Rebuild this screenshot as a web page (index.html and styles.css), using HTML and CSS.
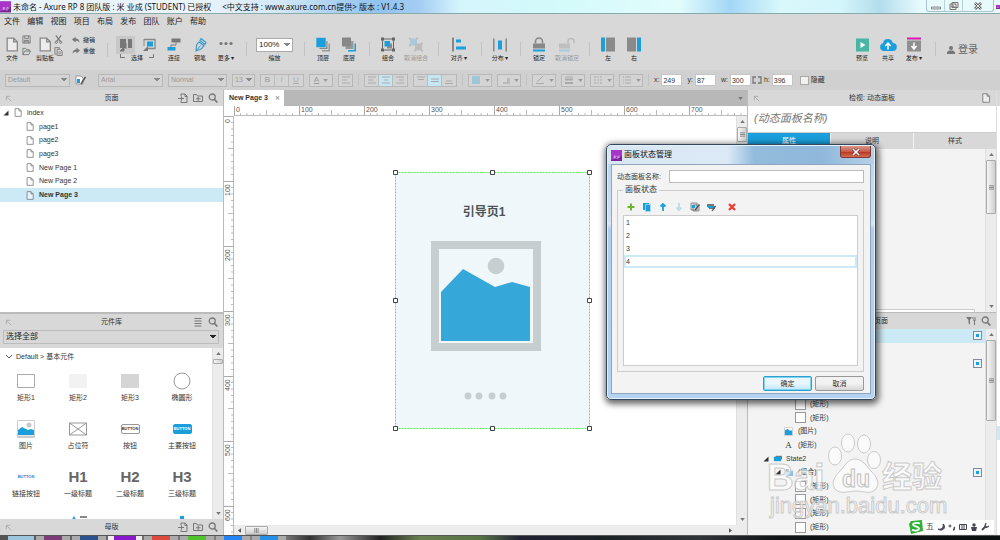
FILE: index.html
```html
<!DOCTYPE html>
<html lang="zh-CN">
<head>
<meta charset="utf-8">
<title>未命名 - Axure RP 8</title>
<link rel="stylesheet" href="styles.css">
</head>
<body>
<svg class="sprite" aria-hidden="true">
  <symbol id="page" viewBox="0 0 12 14"><path d="M1.500 1h6l3.500 3.500V13H1.500zM7.500 1v3.500H11" fill="#fff" fill-opacity=".5" stroke="currentColor" stroke-width="1.200"/></symbol>
  <symbol id="save" viewBox="0 0 10 10"><path d="M1 1h8v8H1zM3 1v3h4V1M2.500 9V6h5v3M3 7.500h4" fill="none" stroke="currentColor"/></symbol>
  <symbol id="open" viewBox="0 0 10 10"><path d="M1 8.500V1.500h3l1 1.500h3v1.500M1 8.500l2-4h6.500L7.500 8.500z" fill="none" stroke="currentColor"/></symbol>
  <symbol id="cut" viewBox="0 0 10 10"><path d="M2 .5L7 7M8 .5L3 7" fill="none" stroke="currentColor" stroke-width="1.300"/><circle cx="2.500" cy="8" r="1.300" fill="none" stroke="currentColor"/><circle cx="7.500" cy="8" r="1.300" fill="none" stroke="currentColor"/></symbol>
  <symbol id="copy" viewBox="0 0 10 10"><path d="M6 2V.700H1V8h2M3.500 2.500h3.500L9 4.500V9.500H3.500zM5 5.500h2.500M5 7.500h2.500" fill="none" stroke="currentColor"/></symbol>
  <symbol id="undo" viewBox="0 0 10 10"><path d="M0 4.500L4.500 1v2.200C7.500 3.200 9.300 5 9.300 8.500 8 6.300 6.500 6 4.500 6v2z" fill="currentColor"/></symbol>
  <symbol id="redo" viewBox="0 0 10 10"><path d="M10 4.500L5.500 1v2.200C2.500 3.200.700 5 .700 8.500 2 6.300 3.500 6 5.500 6v2z" fill="currentColor"/></symbol>
  <symbol id="search" viewBox="0 0 10 10"><circle cx="4.200" cy="4" r="3" fill="none" stroke="currentColor" stroke-width="1.300"/><path d="M6.300 6.200l3 3.300" stroke="currentColor" stroke-width="1.700"/></symbol>
  <symbol id="pin" viewBox="0 0 8 8"><path d="M1.500 6V1.500H6M2 2l5 5" fill="none" stroke="#aaa"/></symbol>
  <symbol id="addpage" viewBox="0 0 10 10"><path d="M3 3V1h4l2 2v6.500H3V8M7 1v2.500h2M0 5.500h6M3.500 3.300v4.400" fill="none" stroke="currentColor"/></symbol>
  <symbol id="addfolder" viewBox="0 0 10 10"><path d="M.5 8.500v-7h3l1 1.500h5v5.500zM3 5.800h4.500M5.200 3.800v4" fill="none" stroke="currentColor"/></symbol>
  <symbol id="tri" viewBox="0 0 6 6"><path d="M5.500.5v5H.5z" fill="#333"/></symbol>
  <symbol id="down" viewBox="0 0 6 4"><path d="M0 0h6L3 4z" fill="currentColor"/></symbol>
  <symbol id="up" viewBox="0 0 6 4"><path d="M0 4h6L3 0z" fill="currentColor"/></symbol>
  <symbol id="rp" viewBox="0 0 12 12"><path d="M0 0h12v12H0z" fill="#7a2497"/><path d="M0 0h12v6L0 11z" fill="#a834c8"/><path d="M3.500 9.500v-3h1.500l.5.700-.7.800H3.500m1.300 0l1 1.500M7.500 10V6.500H9l.6.800-.6.900H7.500" fill="none" stroke="#e9c9f3" stroke-width=".7"/></symbol>
  <symbol id="select" viewBox="0 0 14 14"><path d="M1 1h6v9H1zM9 1h4v9H9z" fill="#777"/><path d="M7 5v6M1 13l4-4v4z" stroke="#777" fill="#777"/></symbol>
  <symbol id="contain" viewBox="0 0 14 14"><path d="M2 1.500h11v9H6" fill="none" stroke="#888" stroke-width="1.300"/><path d="M2 1v7" stroke="#888"/><path d="M5 3.500h6v5H5z" fill="#1a9fdc"/><path d="M1 13l5-5v5z" fill="#777"/></symbol>
  <symbol id="connect" viewBox="0 0 14 14"><path d="M4.500 1h9v4h-9z" fill="#777"/><path d="M9 5v2.500H4V10" stroke="#777" fill="none"/><path d="M.5 9.500h8V13h-8z" fill="#1a9fdc"/></symbol>
  <symbol id="pen" viewBox="0 0 14 14"><path d="M8 1l5 4-1 2-5-4zM6 4.500l5 3.700-2.500 3L3 13.500 3.700 7z" fill="#d8d8d8" stroke="#3799c8" stroke-width="1.100"/><path d="M3 13.500L7.500 8" stroke="#3799c8"/></symbol>
  <symbol id="more" viewBox="0 0 14 14"><circle cx="2" cy="6" r="1.600" fill="#777"/><circle cx="7" cy="6" r="1.600" fill="#777"/><circle cx="12" cy="6" r="1.600" fill="#777"/></symbol>
  <symbol id="top" viewBox="0 0 14 14"><path d="M6 6h8v8H6z" fill="#999"/><path d="M3 3h9v9H3z" fill="#888" stroke="#d8d8d8"/><path d="M0 0h10v10H0z" fill="#1a9fdc" stroke="#d8d8d8" stroke-width=".6"/></symbol>
  <symbol id="bottom" viewBox="0 0 14 14"><path d="M6 6h8v8H6z" fill="#1a9fdc"/><path d="M3 3h9v9H3z" fill="#999" stroke="#d8d8d8"/><path d="M0 0h9v9H0z" fill="#888"/></symbol>
  <symbol id="group" viewBox="0 0 14 14"><path d="M1.500 1.500h11v11h-11z" fill="none" stroke="#666"/><path d="M6 6h5v5H6z" fill="#888"/><path d="M3.500 3.500H9V9H3.500z" fill="#1a9fdc"/><path d="M0 0h3v3H0zM11 0h3v3h-3zM0 11h3v3H0zM11 11h3v3h-3z" fill="#666"/></symbol>
  <symbol id="ungroup" viewBox="0 0 14 14"><path d="M1 1h7v7H1z" fill="#a9cbd9"/><path d="M6 6h7v7H6z" fill="#bcbcbc"/><path d="M0 0h2v2H0zM7 0h2v2H7zM0 7h2v2H0zM12 5h2v2h-2zM5 12h2v2H5zM12 12h2v2h-2z" fill="#bbb"/></symbol>
  <symbol id="align" viewBox="0 0 14 14"><path d="M0 0h2v14H0z" fill="#888"/><path d="M4 2h5v3H4zM4 9h10v3H4z" fill="#1a9fdc"/></symbol>
  <symbol id="spread" viewBox="0 0 14 14"><path d="M0 1h1.500v13H0zM12.500 1H14v13h-1.500z" fill="#888"/><path d="M5 3h4v9H5z" fill="#1a9fdc"/></symbol>
  <symbol id="lock" viewBox="0 0 14 14"><path d="M3.500 6V4a3.500 3.500 0 0 1 7 0v2" fill="none" stroke="#888" stroke-width="1.600"/><path d="M1 6h12v5H1z" fill="#888"/><path d="M1 12h12v2H1z" fill="#1a9fdc"/></symbol>
  <symbol id="unlock" viewBox="0 0 18 14"><path d="M10 6V4a3 3 0 0 1 6 0v2" fill="none" stroke="#bbb" stroke-width="1.500"/><path d="M1 6h11v5H1z" fill="#bfbfbf"/><path d="M1 12h11v2H1z" fill="#a9cbd9"/></symbol>
  <symbol id="left" viewBox="0 0 14 14"><path d="M0 0h4v14H0z" fill="#1a9fdc"/><path d="M5 0h9v14H5z" fill="#8a8a8a"/></symbol>
  <symbol id="right" viewBox="0 0 14 14"><path d="M10 0h4v14h-4z" fill="#1a9fdc"/><path d="M0 0h9v14H0z" fill="#8a8a8a"/></symbol>
  <symbol id="play" viewBox="0 0 14 14"><path d="M1 1h13v13H1z" fill="#4bb5a3"/><path d="M5.500 4.500l5 3-5 3z" fill="#fff"/></symbol>
  <symbol id="cloud" viewBox="0 0 18 14"><path d="M4.500 13.500a4 4 0 0 1-.5-7.800 5 5 0 0 1 9.800-.2 4 4 0 0 1 0 8z" fill="#1a9fdc"/><path d="M9 12V7M6.300 8.500L9 5.500l2.700 3" stroke="#fff" stroke-width="1.500" fill="none"/></symbol>
  <symbol id="publish" viewBox="0 0 14 14"><path d="M0 0h14v2H0z" fill="#d61ab0"/><path d="M0 3h14v11H0z" fill="#8f8f8f"/><path d="M7 5v5M4.500 8.500L7 11.500l2.500-3" stroke="#fff" stroke-width="1.500" fill="none"/></symbol>
  <symbol id="picture" viewBox="0 0 18 18"><path d="M.5.500h17v17H.500z" fill="#fff" stroke="#ccc"/><circle cx="12" cy="5" r="2.500" fill="#c9c9c9"/><path d="M1 10l4-3 6 3 3-1 3 1v5H1z" fill="#1a9fdc"/><path d="M1 15.500h16v2H1z" fill="#ccc"/></symbol>
  <symbol id="tl" viewBox="0 0 10 8"><path d="M1 1h8M1 4h5M1 7h8" stroke="currentColor"/></symbol>
  <symbol id="tc" viewBox="0 0 10 8"><path d="M1 1h8M3 4h4M1 7h8" stroke="currentColor"/></symbol>
  <symbol id="tr" viewBox="0 0 10 8"><path d="M1 1h8M4 4h5M1 7h8" stroke="currentColor"/></symbol>
  <symbol id="vt" viewBox="0 0 10 8"><path d="M1 1h8M2 3.500h6" stroke="currentColor"/></symbol>
  <symbol id="vm" viewBox="0 0 10 8"><path d="M1 3h8M1 5.500h8" stroke="currentColor"/></symbol>
  <symbol id="vb" viewBox="0 0 10 8"><path d="M2 5h6M1 7.500h8" stroke="currentColor"/></symbol>
  <symbol id="grip" viewBox="0 0 6 6"><path d="M0 1h6M0 3h6M0 5h6" stroke="#777"/></symbol>
  <symbol id="stylebrush" viewBox="0 0 11 10"><path d="M1 1h5l2 2v6H1z" fill="#fff" stroke="#999"/><path d="M2 4h3v4H2z" fill="#1a9fdc"/><path d="M10.500 2L6 9" stroke="#555" stroke-width="1.500"/></symbol>
</svg>

<div class="app">
  <header class="titlebar">
    <svg class="logo"><use href="#rp"/></svg>
    <span>未命名 - Axure RP 8 团队版 : 米 业成 (STUDENT) 已授权</span>
    <span class="support">&lt;中文支持 : www.axure.com.cn提供&gt; 版本 : V1.4.3</span>
    <div class="winctl">
      <button aria-label="最小化"><svg viewBox="0 0 12 8"><path d="M1.500 5h9v2h-9z" fill="#ddd" stroke="#777" stroke-width=".8"/></svg></button>
      <button aria-label="还原"><svg viewBox="0 0 12 8"><path d="M4 .5h6v5H4zM2 2h6v5.500H2zM4 4h2v1.500H4z" fill="#eee" stroke="#777"/></svg></button>
      <button class="wide" aria-label="关闭"><svg viewBox="0 0 12 8"><path d="M3 1l6 6M9 1L3 7" stroke="#666" stroke-width="2.600"/><path d="M3.300 1.300l5.400 5.400M8.700 1.300L3.300 6.700" stroke="#eee"/></svg></button>
    </div>
    <svg class="logo peek"><use href="#rp"/></svg>
  </header>

  <nav class="menubar">
    <a href="#">文件</a><a href="#">编辑</a><a href="#">视图</a><a href="#">项目</a><a href="#">布局</a><a href="#">发布</a><a href="#">团队</a><a href="#">账户</a><a href="#">帮助</a>
  </nav>

  <div class="toolbar">
    <button class="tool narrow"><svg><use href="#page"/></svg>文件</button>
    <div class="minis"><button aria-label="保存"><svg><use href="#save"/></svg></button><button aria-label="打开"><svg><use href="#open"/></svg></button></div>
    <button class="tool narrow clip"><svg><use href="#page"/></svg>剪贴板</button>
    <div class="minis"><button aria-label="剪切"><svg><use href="#cut"/></svg></button><button aria-label="复制"><svg><use href="#copy"/></svg></button></div>
    <div class="minis undo"><button><svg><use href="#undo"/></svg>撤销</button><button><svg><use href="#redo"/></svg>重做</button></div>
    <i class="sep first"></i>
    <div class="modes">
      <div><button class="on" aria-label="相交选择"><svg><use href="#select"/></svg></button><button aria-label="包含选择"><svg><use href="#contain"/></svg></button></div>
      <div class="modelabel"><i></i>选择<i class="end"></i></div>
    </div>
    <button class="tool"><svg><use href="#connect"/></svg>连接</button>
    <button class="tool"><svg><use href="#pen"/></svg>钢笔</button>
    <button class="tool"><svg><use href="#more"/></svg>更多 ▾</button>
    <i class="sep"></i>
    <label class="zoom"><select><option>100%</option></select>缩放</label>
    <i class="sep"></i>
    <button class="tool"><svg><use href="#top"/></svg>顶层</button>
    <button class="tool"><svg><use href="#bottom"/></svg>底层</button>
    <i class="sep"></i>
    <button class="tool"><svg><use href="#group"/></svg>组合</button>
    <button class="tool large off"><svg><use href="#ungroup"/></svg>取消组合</button>
    <i class="sep"></i>
    <button class="tool large"><svg><use href="#align"/></svg>对齐 ▾</button>
    <i class="sep"></i>
    <button class="tool"><svg><use href="#spread"/></svg>分布 ▾</button>
    <i class="sep"></i>
    <button class="tool"><svg><use href="#lock"/></svg>锁定</button>
    <button class="tool large off"><svg class="w18"><use href="#unlock"/></svg>取消锁定</button>
    <i class="sep"></i>
    <button class="tool"><svg><use href="#left"/></svg>左</button>
    <button class="tool"><svg><use href="#right"/></svg>右</button>
    <div class="account">
      <button class="tool"><svg><use href="#play"/></svg>预览</button>
      <button class="tool"><svg class="w18"><use href="#cloud"/></svg>共享</button>
      <button class="tool"><svg><use href="#publish"/></svg>发布 ▾</button>
      <i class="sep"></i>
      <button class="login"><svg viewBox="0 0 8 8"><circle cx="4" cy="2" r="2" fill="#777"/><path d="M0 8V6l2-1.500h4L8 6v2z" fill="#777"/></svg>登录</button>
    </div>
  </div>

  <div class="stylebar">
    <select class="s64" aria-label="样式"><option>Default</option></select>
    <button class="plain" aria-label="样式管理"><svg><use href="#stylebrush"/></svg></button>
    <select class="s64 font" aria-label="字体"><option>Arial</option></select>
    <select class="s58" aria-label="字形"><option>Normal</option></select>
    <select class="s22" aria-label="字号"><option>13</option></select>
    <div class="seg"><button><b>B</b></button><button><em>I</em></button><button><u>U</u></button></div>
    <button class="drop"><u>A</u><svg class="arr"><use href="#down"/></svg></button>
    <button class="drop small" aria-label="列表"><svg><use href="#tl"/></svg></button>
    <i class="sep"></i>
    <div class="seg"><button aria-label="左对齐"><svg><use href="#tl"/></svg></button><button class="on" aria-label="居中"><svg><use href="#tc"/></svg></button><button aria-label="右对齐"><svg><use href="#tr"/></svg></button></div>
    <div class="seg"><button aria-label="顶部"><svg><use href="#vt"/></svg></button><button class="on" aria-label="中部"><svg><use href="#vm"/></svg></button><button aria-label="底部"><svg><use href="#vb"/></svg></button></div>
    <i class="sep"></i>
    <button class="drop" aria-label="填充"><svg viewBox="0 0 10 8"><path d="M1 0h8v8H1z" fill="#9fc6d6"/></svg><svg class="arr"><use href="#down"/></svg></button>
    <button class="drop" aria-label="阴影"><svg viewBox="0 0 10 8"><path d="M3 2h7v6H3z" fill="#bbb"/><path d="M1 0h6v6H1z" fill="#d6d6d6"/></svg><svg class="arr"><use href="#down"/></svg></button>
    <i class="sep"></i>
    <button class="drop" aria-label="线条颜色"><svg viewBox="0 0 10 8"><path d="M2 6L8 0M1 7.500h8" stroke="#aaa"/></svg><svg class="arr"><use href="#down"/></svg></button>
    <button class="drop" aria-label="线宽"><svg viewBox="0 0 10 8"><path d="M1 1h8" stroke="#aaa"/><path d="M1 3.500h8M1 7h8" stroke="#aaa" stroke-width="2"/></svg><svg class="arr"><use href="#down"/></svg></button>
    <button class="drop" aria-label="线型"><svg viewBox="0 0 10 8"><path d="M1 1h8M1 4h8M1 7h8" stroke="#aaa" stroke-dasharray="2 1"/></svg><svg class="arr"><use href="#down"/></svg></button>
    <button class="drop" aria-label="箭头"><svg viewBox="0 0 10 8"><path d="M1 1h8M1 4h8M1 7h8" stroke="#aaa" stroke-dasharray="1 1 6"/></svg><svg class="arr"><use href="#down"/></svg></button>
    <i class="sep"></i>
    <label>x: <input value="249"></label>
    <label>y: <input value="87"></label>
    <label>w: <input value="300"></label>
    <label class="linked"><svg viewBox="0 0 10 8"><path d="M4 1H1v6h3M6 1h3v6H6" fill="none" stroke="#777" stroke-width="1.300"/></svg>h: <input value="396"></label>
    <label class="hide"><input type="checkbox">隐藏</label>
  </div>

  <main class="work">
    <aside class="left">
      <section class="pages">
        <h2 class="head"><svg class="pin"><use href="#pin"/></svg><span>页面</span><svg><use href="#addpage"/></svg><svg><use href="#addfolder"/></svg><svg><use href="#search"/></svg></h2>
        <ul class="tree">
          <li class="root"><svg class="tri"><use href="#tri"/></svg><svg><use href="#page"/></svg>index</li>
          <li><svg><use href="#page"/></svg>page1</li>
          <li><svg><use href="#page"/></svg>page2</li>
          <li><svg><use href="#page"/></svg>page3</li>
          <li><svg><use href="#page"/></svg>New Page 1</li>
          <li><svg><use href="#page"/></svg>New Page 2</li>
          <li class="current"><svg><use href="#page"/></svg>New Page 3</li>
        </ul>
      </section>
      <section class="library">
        <h2 class="head"><svg class="pin"><use href="#pin"/></svg><span>元件库</span><svg viewBox="0 0 10 10"><path d="M1.500 1.500h7M1.500 4h7M1.500 6.500h7M1.500 9h7" stroke="currentColor"/></svg><svg><use href="#search"/></svg></h2>
        <div class="libselect"><select aria-label="元件库"><option>选择全部</option></select></div>
        <div class="libbody">
          <div class="widgets">
            <h3><svg viewBox="0 0 8 6"><path d="M1 1l3 3 3-3" fill="none" stroke="#555"/></svg>Default &gt; 基本元件</h3>
            <ul>
              <li><svg viewBox="0 0 20 20"><path d="M1.500 3.500h17v13h-17z" fill="#fff" stroke="#aaa"/></svg>矩形1</li>
              <li><svg viewBox="0 0 20 20"><path d="M1 3h18v14H1z" fill="#f2f2f2"/></svg>矩形2</li>
              <li><svg viewBox="0 0 20 20"><path d="M1 3h18v14H1z" fill="#d5d5d5"/></svg>矩形3</li>
              <li><svg viewBox="0 0 20 20"><circle cx="10" cy="10" r="8" fill="#fff" stroke="#999"/></svg>椭圆形</li>
              <li><svg viewBox="-1 -1 20 20"><use href="#picture" width="18" height="18"/></svg>图片</li>
              <li><svg viewBox="0 0 20 20"><path d="M1.500 4h17v12h-17zl17 12M18.500 4l-17 12" fill="none" stroke="#999"/></svg>占位符</li>
              <li><span class="wbtn">BUTTON</span>按钮</li>
              <li><span class="wbtn primary">BUTTON</span>主要按钮</li>
              <li><span class="wbtn link">BUTTON</span>链接按钮</li>
              <li><b>H1</b>一级标题</li>
              <li><b>H2</b>二级标题</li>
              <li><b>H3</b>三级标题</li>
              <li></li>
              <li><svg viewBox="0 0 20 20"><path d="M3 6l3-5 3 5z" fill="#1a9fdc"/><path d="M12 1h7v2h-7z" fill="#888"/></svg></li>
              <li></li>
              <li><svg viewBox="0 0 20 20"><path d="M8 1h4v5H8z" fill="#1a9fdc"/></svg></li>
            </ul>
          </div>
          <div class="vbar"><svg class="arr"><use href="#up"/></svg><i class="thumb tiny"></i><svg class="arr last"><use href="#down"/></svg></div>
        </div>
        <h2 class="head"><svg class="pin"><use href="#pin"/></svg><span>母版</span><svg><use href="#addpage"/></svg><svg><use href="#addfolder"/></svg><svg><use href="#search"/></svg></h2>
      </section>
    </aside>

    <section class="center">
      <div class="tabs"><div class="tab">New Page 3<button aria-label="关闭标签">✕</button></div><svg class="arr"><use href="#down"/></svg></div>
      <div class="editor">
        <div class="corner"></div>
        <div class="ruler hr">
          <svg class="ticks"><defs><pattern id="ht" width="65" height="10" patternUnits="userSpaceOnUse"><path d="M.5 0v10" stroke="#aaa"/><path d="M6.500 7v3M13 7v3M19.500 7v3M26 7v3M39 7v3M45.500 7v3M52 7v3M58.500 7v3M32.500 4v6" stroke="#bbb"/></pattern></defs><rect width="100%" height="10" fill="url(#ht)"/></svg>
          <span>0</span><span>100</span><span>200</span><span>300</span><span>400</span><span>500</span><span>600</span><span>700</span>
        </div>
        <div class="ruler vr">
          <svg class="ticks"><defs><pattern id="vtk" width="10" height="65" patternUnits="userSpaceOnUse"><path d="M0 .5h10" stroke="#aaa"/><path d="M7 6.500h3M7 13h3M7 19.500h3M7 26h3M7 39h3M7 45.500h3M7 52h3M7 58.500h3M4 32.500h6" stroke="#bbb"/></pattern></defs><rect width="10" height="100%" fill="url(#vtk)"/></svg>
          <span>0</span><span>100</span><span>200</span><span>300</span><span>400</span><span>500</span><span>600</span>
        </div>
        <div class="canvas">
          <div class="panel">
            <svg viewBox="0 0 195 257">
              <path d="M.5.500h194v256H.500z" fill="#eff7fa" stroke="#4df04d" stroke-dasharray="2 1"/>
              <path d="M36 69h110v110H36z" fill="#c7ced0"/><path d="M44 77h94v94H44z" fill="#eff7fa"/>
              <circle cx="101" cy="94" r="8.300" fill="#c7ced0"/>
              <path d="M46 120l22-23 32 18 17-5 18 5v54H46z" fill="#35a7d9"/>
              <g fill="#c7ced0"><circle cx="73" cy="224" r="3.400"/><circle cx="84" cy="224" r="3.400"/><circle cx="97" cy="224" r="3.400"/><circle cx="108" cy="224" r="3.400"/></g>
              <g fill="#fff" stroke="#444"><path d="M-1.500-1.500h4v4h-4zM95.500-1.500h4v4h-4zM192.500-1.500h4v4h-4zM-1.500 126.500h4v4h-4zM192.500 126.500h4v4h-4zM-1.500 254.500h4v4h-4zM95.500 254.500h4v4h-4zM192.500 254.500h4v4h-4z"/></g>
            </svg>
            <strong>引导页1</strong>
          </div>
        </div>
        <div class="vbar"><svg class="arr"><use href="#up"/></svg><i class="thumb short"><svg><use href="#grip"/></svg></i><svg class="arr last"><use href="#down"/></svg></div>
        <div class="hbar"><svg viewBox="0 0 4 6"><path d="M4 0v6L0 3z" fill="#555"/></svg><i class="thumb"><svg class="turn"><use href="#grip"/></svg></i><svg class="last" viewBox="0 0 4 6"><path d="M0 0v6l4-3z" fill="#555"/></svg></div>
      </div>
    </section>

    <aside class="right">
      <section class="inspect">
        <h2 class="head"><svg class="pin"><use href="#pin"/></svg><span>检视: 动态面板</span><svg><use href="#page"/></svg></h2>
        <div class="name">(动态面板名称)</div>
        <div class="ptabs"><button class="on">属性</button><button>说明</button><button>样式</button></div>
        <div class="props"><div class="field"></div><div class="vbar"><svg class="arr"><use href="#up"/></svg><i class="thumb"><svg><use href="#grip"/></svg></i><svg class="arr last"><use href="#down"/></svg></div></div>
      </section>
      <section class="outline">
        <h2 class="head"><svg class="pin"><use href="#pin"/></svg><span>概要: 页面</span><svg viewBox="0 0 10 10"><path d="M0 1h6L4 4v5L2.500 7V4z" fill="#777"/><path d="M6 2h4M7 4h3M8.500 4v5" stroke="#777"/></svg><svg><use href="#search"/></svg></h2>
        <div class="outbody">
          <ul>
            <li class="current"><i class="state"></i></li><li></li><li><i class="state"></i></li><li></li><li></li>
            <li class="d3"><i class="box"></i>(矩形)</li>
            <li class="d3"><i class="box"></i>(矩形)</li>
            <li class="d2"><svg viewBox="0 0 10 10"><path d="M.5.500h9v9h-9z" fill="#fff" stroke="#ccc"/><path d="M1 4l3-2 2 2h3v5H1z" fill="#1a9fdc"/></svg>(图片)</li>
            <li class="d2"><span class="glyph">A</span>(矩形)</li>
            <li class="d1"><svg class="tri"><use href="#tri"/></svg><svg viewBox="0 0 10 10"><path d="M3 2h7v4H3z" fill="#777"/><path d="M1 3h8v5H1z" fill="#1a9fdc"/></svg>State2</li>
            <li class="d1 deep"><svg class="tri"><use href="#tri"/></svg><svg viewBox="0 0 10 10"><path d="M1 1h3l1 2h4v6H1z" fill="#7fc4e4"/><path d="M1 1h3v3H1z" fill="#444"/></svg>(组合)<i class="state"></i></li>
            <li class="d3"><i class="box"></i>(矩形)</li>
            <li class="d3"><i class="box"></i>(矩形)</li>
            <li class="d3"><i class="box"></i>(矩形)</li>
            <li class="d3"><i class="box"></i>(矩形)</li>
          </ul>
          <div class="vbar"><svg class="arr"><use href="#up"/></svg><i class="thumb tall"><svg><use href="#grip"/></svg></i></div>
        </div>
      </section>
    </aside>
    <div class="neighbour"><i></i><i class="hit"></i></div>
  </main>
  <footer class="taskbar"><i class="c1"></i><i class="c2"></i><i class="c3"></i><i class="c4"></i><i class="c5"></i><i class="c6"></i><i class="c7"></i><i class="c8"></i></footer>

  <svg class="mark" viewBox="0 0 190 92" aria-label="Baidu 经验">
    <g fill="#fff" fill-opacity=".75" stroke="#c4c4c4" stroke-width="1">
      <ellipse cx="67" cy="23" rx="6.500" ry="9"/><ellipse cx="80" cy="10" rx="6.500" ry="9"/><ellipse cx="96" cy="11" rx="6.500" ry="9"/><ellipse cx="106" cy="27" rx="6.500" ry="8.500"/>
      <path d="M87 26c8 0 11 7 16 12 6 6 9 12 5 18-5 6-13 2-20 2s-16 4-21-2c-4-6-1-12 5-18 5-5 8-12 15-12z"/>
      <g font-family="'Liberation Sans','Noto Sans CJK SC',sans-serif" font-weight="bold">
        <text x="-1" y="57" font-size="37">Bai</text><text x="114" y="54" font-size="30">经验</text>
        <text x="2" y="80" font-size="22" font-weight="normal">jingyan.baidu.com</text>
      </g>
    </g>
    <text x="74" y="54" font-size="23" font-family="'Liberation Sans',sans-serif" font-weight="bold" fill="#fafafa" stroke="#b8b8b8">du</text>
  </svg>

  <div class="ime">
    <svg class="sogou" viewBox="0 0 14 14"><path d="M2 1l11-1 1 11-12 3L0 4z" fill="#2eb135"/><path d="M11 3.500c-3-1-7-.5-7 1.200S10.500 6.500 10 8.800 5 11 3 9.700" fill="none" stroke="#fff" stroke-width="1.800"/></svg>
    <span>五</span>
    <svg viewBox="0 0 8 8"><path d="M6 1c1 4-2 6-5 5 2 2 6 1 6.500-1.500C8 3 7 1.500 6 1z" fill="#445" stroke="#445"/></svg>
    <svg viewBox="0 0 8 8"><circle cx="2" cy="3" r="1" fill="none" stroke="#445"/><path d="M6 4c1 1 0 3-1 3" stroke="#445" stroke-width="1.500" fill="none"/></svg>
    <svg viewBox="0 0 8 8"><path d="M.5 1.500h7v5h-7zM2 3h4M2 5h4" fill="none" stroke="#445"/></svg>
    <svg viewBox="0 0 8 8"><circle cx="4" cy="2" r="1.700" fill="#445"/><path d="M1 4h6l-1 4H2z" fill="#445"/></svg>
    <svg viewBox="0 0 8 8"><path d="M1 7l4-4" stroke="#445" stroke-width="1.800"/><path d="M5 0L4 3l1.500 1.500L8 3" stroke="#445" stroke-width="1.300" fill="none"/></svg>
  </div>

  <div class="dialog" role="dialog" aria-labelledby="dlg">
    <div class="dtitle"><svg><use href="#rp"/></svg><span id="dlg">面板状态管理</span>
      <button aria-label="关闭"><svg viewBox="0 0 10 8"><path d="M2 1l6 6M8 1L2 7" stroke="#733" stroke-width="2.800"/><path d="M2 1l6 6M8 1L2 7" stroke="#fff" stroke-width="1.600"/></svg></button></div>
    <form class="dbody">
      <label class="dname">动态面板名称:<input></label>
      <fieldset>
        <legend>面板状态</legend>
        <div class="dtools">
          <button type="button" aria-label="添加"><svg viewBox="0 0 10 10"><path d="M5 1.500v7M1.500 5h7" stroke="#6cb52d" stroke-width="2"/></svg></button>
          <button type="button" aria-label="复制"><svg viewBox="0 0 10 10"><path d="M1 1h6v7H1z" fill="#1a9fdc"/><path d="M3.500 2.500h5v7h-5z" fill="#1a9fdc" stroke="#b5def0" stroke-width=".7"/></svg></button>
          <button type="button" aria-label="上移"><svg viewBox="0 0 10 10"><path d="M5 9V3M2.500 4.500L5 2l2.500 2.500" stroke="#1a9fdc" stroke-width="1.800" fill="none"/></svg></button>
          <button type="button" aria-label="下移"><svg viewBox="0 0 10 10"><path d="M5 1v6M2.500 5.500L5 8l2.500-2.500" stroke="#b9dcec" stroke-width="1.800" fill="none"/></svg></button>
          <button type="button" aria-label="编辑状态"><svg viewBox="0 0 10 10"><path d="M1 1h6v7H1zM3 3h6v6H3z" fill="#ddd" stroke="#777" stroke-width=".8"/><path d="M2 3h3v3H2z" fill="#1a9fdc"/><path d="M9.500 2.500L5 8" stroke="#555" stroke-width="1.300"/></svg></button>
          <button type="button" aria-label="编辑全部"><svg viewBox="0 0 10 10"><path d="M1 2h7v3H1zM3 4h6v3H3z" fill="#777"/><path d="M2 4h5v2H2z" fill="#1a9fdc"/><path d="M9.500 4L6 9" stroke="#555" stroke-width="1.300"/></svg></button>
          <button type="button" class="del" aria-label="删除"><svg viewBox="0 0 10 10"><path d="M2 2l6 6M8 2L2 8" stroke="#f03a2c" stroke-width="2.200"/></svg></button>
        </div>
        <ul class="states"><li>1</li><li>2</li><li>3</li><li class="current">4</li></ul>
      </fieldset>
      <div class="dfoot"><button type="button" class="ok">确定</button><button type="button">取消</button></div>
    </form>
  </div>
</div>
</body>
</html>
```
FILE: styles.css
```css
* { box-sizing: border-box; }
body { margin: 0; font: 7px/10px "Liberation Sans", "Noto Sans CJK SC", sans-serif; color: #333; background: #d8d8d8; }
button, input, select { font: inherit; color: inherit; margin: 0; padding: 0; border: 0; background: none; border-radius: 0; }
ul { list-style: none; margin: 0; padding: 0; }
h2, h3 { margin: 0; font: inherit; }
svg { display: block; flex: none; }
.sprite { position: absolute; width: 0; height: 0; }
.app { position: relative; height: 100vh; display: flex; flex-direction: column; overflow: hidden; }

.titlebar { height: 14px; flex: none; display: flex; align-items: center; font: 8px/13px "Noto Sans", "Noto Sans CJK SC", sans-serif; color: #111; border-bottom: 1px solid #8aa; background: linear-gradient(90deg, #e8f2fa 0, #eaf4fb 20%, #d3e8f6 28%, #a8d0f0 34%, #8fc3ee 38%, #a6cdf3 42%, #d5f5fc 46%, #d3fafa 55%, #e2fcfc 68%, #a3d6f5 73%, #d8f8fb 78%, #d4f5fb 84%, #b3ddec 88%, #e6fafc 92%, #e8fafc 100%); }
.logo { width: 11px; height: 12px; margin-right: 2px; }
.peek { width: 4px; margin: 0; }
.support { margin-left: 11px; }
.winctl { margin-left: auto; margin-right: 2px; align-self: flex-start; display: flex; height: 12px; border: 1px solid #a9c4cc; border-top: 0; border-radius: 0 0 3px 3px; }
.winctl button { width: 18px; display: grid; place-items: center; border-right: 1px solid #b9d2d8; }
.winctl .wide { width: 30px; border: 0; }
.winctl svg { width: 12px; height: 8px; }

.menubar { height: 16px; flex: none; width: 208px; padding: 0 2px 0 4px; display: flex; justify-content: space-between; align-items: center; font-size: 8px; }
.menubar a { color: #222; text-decoration: none; }

.toolbar { height: 40px; flex: none; display: flex; align-items: center; padding-left: 2px; font-size: 6px; line-height: 8px; color: #222; }
.tool { width: 26px; flex: none; display: flex; flex-direction: column; align-items: center; gap: 2px; white-space: nowrap; height: 26px; line-height: 8px; }
.tool svg { width: 14px; height: 15px; }
.tool svg.w18 { width: 18px; }
.narrow { width: 20px; }
.narrow svg { color: #888; }
.clip { width: 16px; margin-left: 5px; margin-right: 1px; }
.large { width: 30px; }
.off { color: #999; }
.minis { width: 10px; flex: none; display: flex; flex-direction: column; gap: 3px; margin-bottom: 9px; }
.minis svg { width: 9px; height: 9px; color: #777; }
.minis button { display: flex; align-items: center; gap: 3px; white-space: nowrap; }
.undo { width: 25px; margin-left: 8px; }
.undo svg { width: 8px; height: 8px; }
.sep { width: 1px; height: 14px; flex: none; background: #c2c2c2; margin: 0 5px 0 7px; }
.toolbar .sep { margin-bottom: 2px; }
.toolbar .first { margin: 0 8px 0 10px; }
.modes { width: 42px; margin: 0 3px 2px 0; display: flex; flex-direction: column; }
.modes div { display: flex; justify-content: space-between; }
.modes button { width: 19px; height: 18px; display: grid; place-items: center; }
.modes .on { background: #c8c8c8; }
.modes svg { width: 14px; height: 14px; }
.modes .modelabel { justify-content: center; gap: 6px; }
.modelabel i { width: 5px; height: 4px; border: solid #777; border-width: 0 0 1px 1px; }
.modelabel .end { border-width: 0 1px 1px 0; }
.zoom { margin: 0 4px; width: 37px; display: flex; flex-direction: column; align-items: center; gap: 2px; }
.zoom select { width: 37px; height: 14px; border: 1px solid #aaa; background-color: #fff; font-size: 8px; }
select { appearance: none; background-image: linear-gradient(225deg, #888 50%, transparent 50%), linear-gradient(135deg, #888 50%, transparent 50%); background-size: 3px 4px; background-position: right 5px center, right 2px center; background-repeat: no-repeat; padding-left: 2px; }
.account { margin-left: auto; display: flex; align-items: center; padding-right: 22px; }
.account .sep { margin-right: 11px; margin-left: 8px; }
.login { display: flex; align-items: center; gap: 3px; font-size: 10px; line-height: 14px; color: #666; }
.login svg { width: 8px; height: 8px; }

.stylebar { height: 20px; flex: none; display: flex; align-items: center; gap: 5px; padding-left: 5px; background: #d0d0d0; white-space: nowrap; }
.stylebar select, .seg, .drop { height: 13px; flex: none; border: 1px solid #b8b8b8; color: #999; background-color: #d4d4d4; }
.s64 { width: 65px; }
.s58 { width: 59px; }
.s22 { width: 23px; }
.font { margin-left: 7px; }
.plain svg { width: 11px; height: 10px; }
.seg { display: flex; }
.seg button { width: 14px; display: grid; place-items: center; border-right: 1px solid #bbb; font-size: 8px; color: #aaa; }
.seg button:last-child { border: 0; }
.seg svg { width: 10px; height: 8px; }
.seg .on { background: #c5e7f3; }
.drop { width: 24px; display: flex; align-items: center; justify-content: center; gap: 4px; font-size: 8px; }
.drop svg { width: 10px; height: 8px; }
.small { width: 15px; color: #aaa; }
.drop .arr, .arr { width: 5px; height: 3px; color: #999; }
.stylebar .sep { margin: 0; height: 12px; }
.stylebar label { display: flex; align-items: center; gap: 2px; }
.stylebar label input { width: 21px; height: 12px; background: #fff; border: 1px solid #c5c5c5; padding-left: 1px; }
.stylebar label svg { width: 10px; height: 8px; }
.linked { margin-left: -4px; }
.stylebar .hide { margin-left: 2px; }
.stylebar .hide input { width: 9px; height: 9px; appearance: none; background: #f2f2f2; border: 1px solid #aaa; }

.work { flex: 1; min-height: 0; display: grid; grid-template-columns: 223px minmax(0, 1fr) 248px 4px; background: #fff; }
.head { height: 16px; flex: none; background: #d8d8d8; display: flex; align-items: center; gap: 5px; padding: 0 5px; position: relative; color: #333; }
.head span { position: absolute; left: 0; right: 0; text-align: center; }
.head svg { width: 10px; height: 10px; color: #777; }
.head .pin { width: 7px; height: 7px; margin-right: auto; }
.left { display: flex; flex-direction: column; min-height: 0; }
.pages { height: 222px; flex: none; }
.tree { display: grid; grid-template-rows: repeat(7, 1fr); height: 96px; }
.tree li { display: flex; align-items: center; gap: 5px; padding-left: 26px; }
.tree .root { padding-left: 3px; }
.tree svg { width: 8px; height: 9px; color: #777; }
.tree .tri { width: 6px; height: 6px; }
.current { background: #cbeaf6; }
.tree .current { font-weight: bold; }
.library { flex: 1; min-height: 0; display: flex; flex-direction: column; border-top: 2px solid #bbb; }
.libselect { background: #d8d8d8; padding: 0 4px 4px 3px; }
.libselect select { display: block; width: 100%; height: 14px; border: 1px solid #bcbcbc; font-size: 8px; color: #222; background-image: linear-gradient(225deg, #222 50%, transparent 50%), linear-gradient(135deg, #222 50%, transparent 50%); }
.libbody { flex: 1; min-height: 0; display: flex; }
.widgets { flex: 1; overflow: hidden; }
.widgets h3 { height: 17px; display: flex; align-items: center; gap: 3px; padding-left: 5px; }
.widgets h3 svg { width: 8px; height: 6px; }
.widgets ul { display: grid; grid-template-columns: repeat(4, 1fr); padding: 6px 4px 0 0; }
.widgets li { height: 48px; display: flex; flex-direction: column; align-items: center; gap: 2px; white-space: nowrap; }
.widgets li svg { width: 20px; height: 20px; }
.widgets b { font-size: 15px; line-height: 20px; color: #666; }
.wbtn { width: 19px; height: 10px; margin: 5px 0; border: 1px solid #999; border-radius: 2px; font: bold 4px/8px "Liberation Sans", sans-serif; text-align: center; }
.primary { background: #1a9fdc; border-color: #1a9fdc; color: #fff; }
.link { border-color: transparent; color: #2b84cc; }
.vbar { width: 11px; flex: none; background: #ececec; border-left: 1px solid #e0e0e0; display: flex; flex-direction: column; align-items: center; padding: 4px 0; gap: 4px; }
.vbar .arr { color: #777; }
.last { margin-top: auto; }
.thumb { width: 10px; height: 54px; border: 1px solid #aaa; border-radius: 1px; background: linear-gradient(90deg, #f6f6f6, #cfcfcf); display: grid; place-items: center; }
.thumb svg { width: 5px; height: 5px; }
.tiny { height: 5px; }
.short { height: 15px; }
.tall { height: 81px; }

.center { display: flex; flex-direction: column; min-height: 0; border: solid #bbb; border-width: 0 1px; }
.tabs { height: 16px; flex: none; background: #b8b8b8; display: flex; justify-content: space-between; align-items: center; padding-right: 4px; }
.tab { width: 60px; height: 16px; background: #fff; display: flex; align-items: center; justify-content: space-between; padding: 0 4px 0 5px; font-weight: bold; white-space: nowrap; }
.tab button { color: #999; font-size: 6px; }
.tabs .arr { color: #777; }
.editor { flex: 1; min-height: 0; display: grid; grid-template: 10px minmax(0, 1fr) 10px / 10px minmax(0, 1fr) 11px; }
.ruler { display: flex; overflow: hidden; position: relative; color: #555; }
.ticks { position: absolute; left: 0; top: 0; width: 100%; height: 100%; }
.ruler span { width: 65px; flex: none; font-size: 7px; line-height: 8px; padding-left: 2px; position: relative; }
.hr { grid-column: 2 / 4; border-bottom: 1px solid #bbb; }
.vr { grid-row: 2 / 4; grid-column: 1; flex-direction: column; border-right: 1px solid #bbb; }
.ruler.vr span { width: 8px; height: 65px; padding: 0 0 3px; writing-mode: vertical-rl; transform: rotate(180deg); text-align: right; }
.canvas { position: relative; background: #fff; overflow: hidden; }
.panel { position: absolute; left: 161px; top: 56px; width: 195px; }
.panel svg { width: 195px; height: 257px; overflow: visible; }
.panel strong { position: absolute; top: 31px; left: 0; width: 178px; text-align: center; font: bold 12px/18px "Liberation Sans", "Noto Sans CJK SC", sans-serif; color: #4b5356; }
.hbar { grid-column: 2 / 4; background: #ececec; display: flex; align-items: center; gap: 4px; padding: 0 15px 0 4px; }
.hbar > svg { width: 3px; height: 5px; }
.hbar .thumb { width: 23px; height: 9px; background: linear-gradient(#f6f6f6, #ccc); }
.hbar .last { margin: 0 0 0 auto; }
.turn { transform: rotate(90deg); }

.right { display: flex; flex-direction: column; min-height: 0; background: #f3f3f3; }
.inspect { height: 222px; flex: none; display: flex; flex-direction: column; }
.name { height: 26px; background: #fff; padding: 0 6px; font-size: 11px; line-height: 25px; font-style: italic; color: #777; }
.ptabs { height: 17px; display: grid; grid-template-columns: repeat(3, 1fr); gap: 1px; border-top: 1px solid #ccc; }
.ptabs button { background: #d8d8d8; }
.ptabs .on { background: #1a9fdc; color: #fff; }
.props { flex: 1; display: flex; justify-content: space-between; align-items: flex-end; }
.props .vbar { align-self: stretch; }
.field { width: 227px; height: 3px; background: #fff; border: 1px solid #ccc; border-bottom: 0; }
.outline { flex: 1; min-height: 0; border-top: 1px solid #bbb; }
.outbody { display: flex; height: calc(100% - 16px); }
.outbody ul { flex: 1; display: grid; grid-template-rows: repeat(15, 1fr); height: 205px; }
.outbody li { display: flex; align-items: center; gap: 5px; padding-right: 2px; min-height: 0; }
.outbody li svg { width: 9px; height: 9px; }
.outbody li .tri { width: 6px; height: 6px; }
.state { width: 7px; height: 7px; margin-left: auto; background: #1a9fdc; border: 2px solid #e8f6fb; outline: 1px solid #889; margin-right: 2px; }
.box { width: 11px; height: 11px; background: #fff; border: 1px solid #999; }
.glyph { width: 9px; font: 9px/10px "Liberation Serif", serif; text-align: center; }
.outbody .d3 { padding-left: 47px; gap: 4px; }
.d2 { padding-left: 36px; }
.outbody .d1 { padding-left: 15px; gap: 4px; }
.outbody .deep { padding-left: 27px; }
.neighbour { display: flex; flex-direction: column; justify-content: space-between; padding-bottom: 95px; border-left: 1px solid #ddd; }
.neighbour i { height: 16px; background: #d8d8d8; }
.neighbour .hit { height: 14px; background: #cbeaf6; }

.taskbar { height: 5px; flex: none; display: flex; gap: 2px; background: linear-gradient(90deg, #555 0, #888 28%, #333 31%, #999 34%, #222 38%, #6a8052 42%, #577344 48%, #223 52%, #1b2226 60%, #30353a 70%, #101416 78%, #0a0f10 100%); border-top: 1px solid #555; padding-left: 8px; }
.taskbar i { width: 34px; background: #999; border: solid #aaa; border-width: 0 8px; }
.taskbar .c1 { background: #9cc6de; width: 26px; border: 0; }
.taskbar .c2 { background: #7d3c78; }
.taskbar .c3 { background: #2c5290; }
.taskbar .c4 { background: #8a18cc; border-color: #eee; border-width: 0 6px; }
.taskbar .c5 { background: #dd4b3e; }
.taskbar .c6 { background: #4fc32c; }
.taskbar .c7 { background: #2385f5; }
.taskbar .c8 { background: #2590e8; }

.mark { position: absolute; left: 768px; top: 433px; width: 190px; height: 92px; opacity: .85; }
.ime { position: absolute; left: 909px; top: 520px; width: 85px; height: 14px; background: #fff; display: flex; align-items: center; gap: 3px; color: #445; font-size: 8px; }
.ime svg { width: 8px; height: 8px; }
.ime .sogou { width: 14px; height: 14px; }

.dialog { position: absolute; left: 606px; top: 144px; width: 270px; height: 256px; padding: 0 4px 5px; display: flex; flex-direction: column; border: 1px solid #35475a; border-radius: 5px; background: linear-gradient(#b9d3ee 0, #cfe1f3 30%, #d7e7f6 31%, #aecdf0 33%, #b4d2f2 100%); box-shadow: inset 0 0 0 1px #e4f0fa, 1px 2px 6px 2px rgba(0, 0, 0, .6); }
.dtitle { height: 18px; flex: none; display: flex; align-items: center; gap: 2px; font-size: 8px; color: #111; background: linear-gradient(90deg, #d9e7f5 0, #dce9f6 45%, #92bbdc 55%, #8fb8da 80%, #b6d0e8); margin: 1px -3px 0; padding-left: 3px; border-radius: 4px 4px 0 0; }
.dtitle svg { width: 11px; height: 11px; }
.dtitle button { width: 31px; height: 12px; margin: 0 3px 0 auto; align-self: flex-start; display: grid; place-items: center; background: linear-gradient(#d9968a, #c65c4a 50%, #b23220 51%, #d86c50); border: 1px solid #7c3b35; border-top: 0; border-radius: 0 0 3px 3px; }
.dtitle button svg { width: 10px; height: 8px; }
.dbody { flex: 1; background: #f3f3f3; border: 1px solid #8fa6bd; padding: 5px 6px 2px 5px; display: flex; flex-direction: column; }
.dname { display: flex; align-items: center; justify-content: space-between; white-space: nowrap; }
.dname input { width: 195px; height: 13px; border: 1px solid #bbb; background: #fff; }
.dbody fieldset { flex: 1; min-height: 0; margin: 2px 0 0; padding: 2px 5px 5px; border: 1px solid #ccc; display: flex; flex-direction: column; }
legend { padding: 0 2px; font-size: 8px; line-height: 10px; }
.dtools { display: flex; gap: 6px; padding: 5px 3px 3px; }
.dtools svg { width: 10px; height: 10px; }
.dtools .del { margin-left: 5px; }
.states { flex: 1; background: #fff; border: 1px solid #ccc; }
.states li { height: 13px; line-height: 13px; padding-left: 2px; }
.states .current { background: #fff; border: 2px solid #cbeaf6; line-height: 9px; padding: 0; }
.dfoot { display: flex; justify-content: flex-end; gap: 3px; padding-top: 4px; }
.dfoot button { width: 49px; height: 15px; border: 1px solid #999; border-radius: 2px; background: linear-gradient(#f2f2f2 50%, #d6d6d6); }
.dfoot .ok { border: 1px solid #2a9fd0; box-shadow: inset 0 0 0 1px #7fd3f2; background: linear-gradient(#eaf6fd 50%, #bfe5fa); }
```
